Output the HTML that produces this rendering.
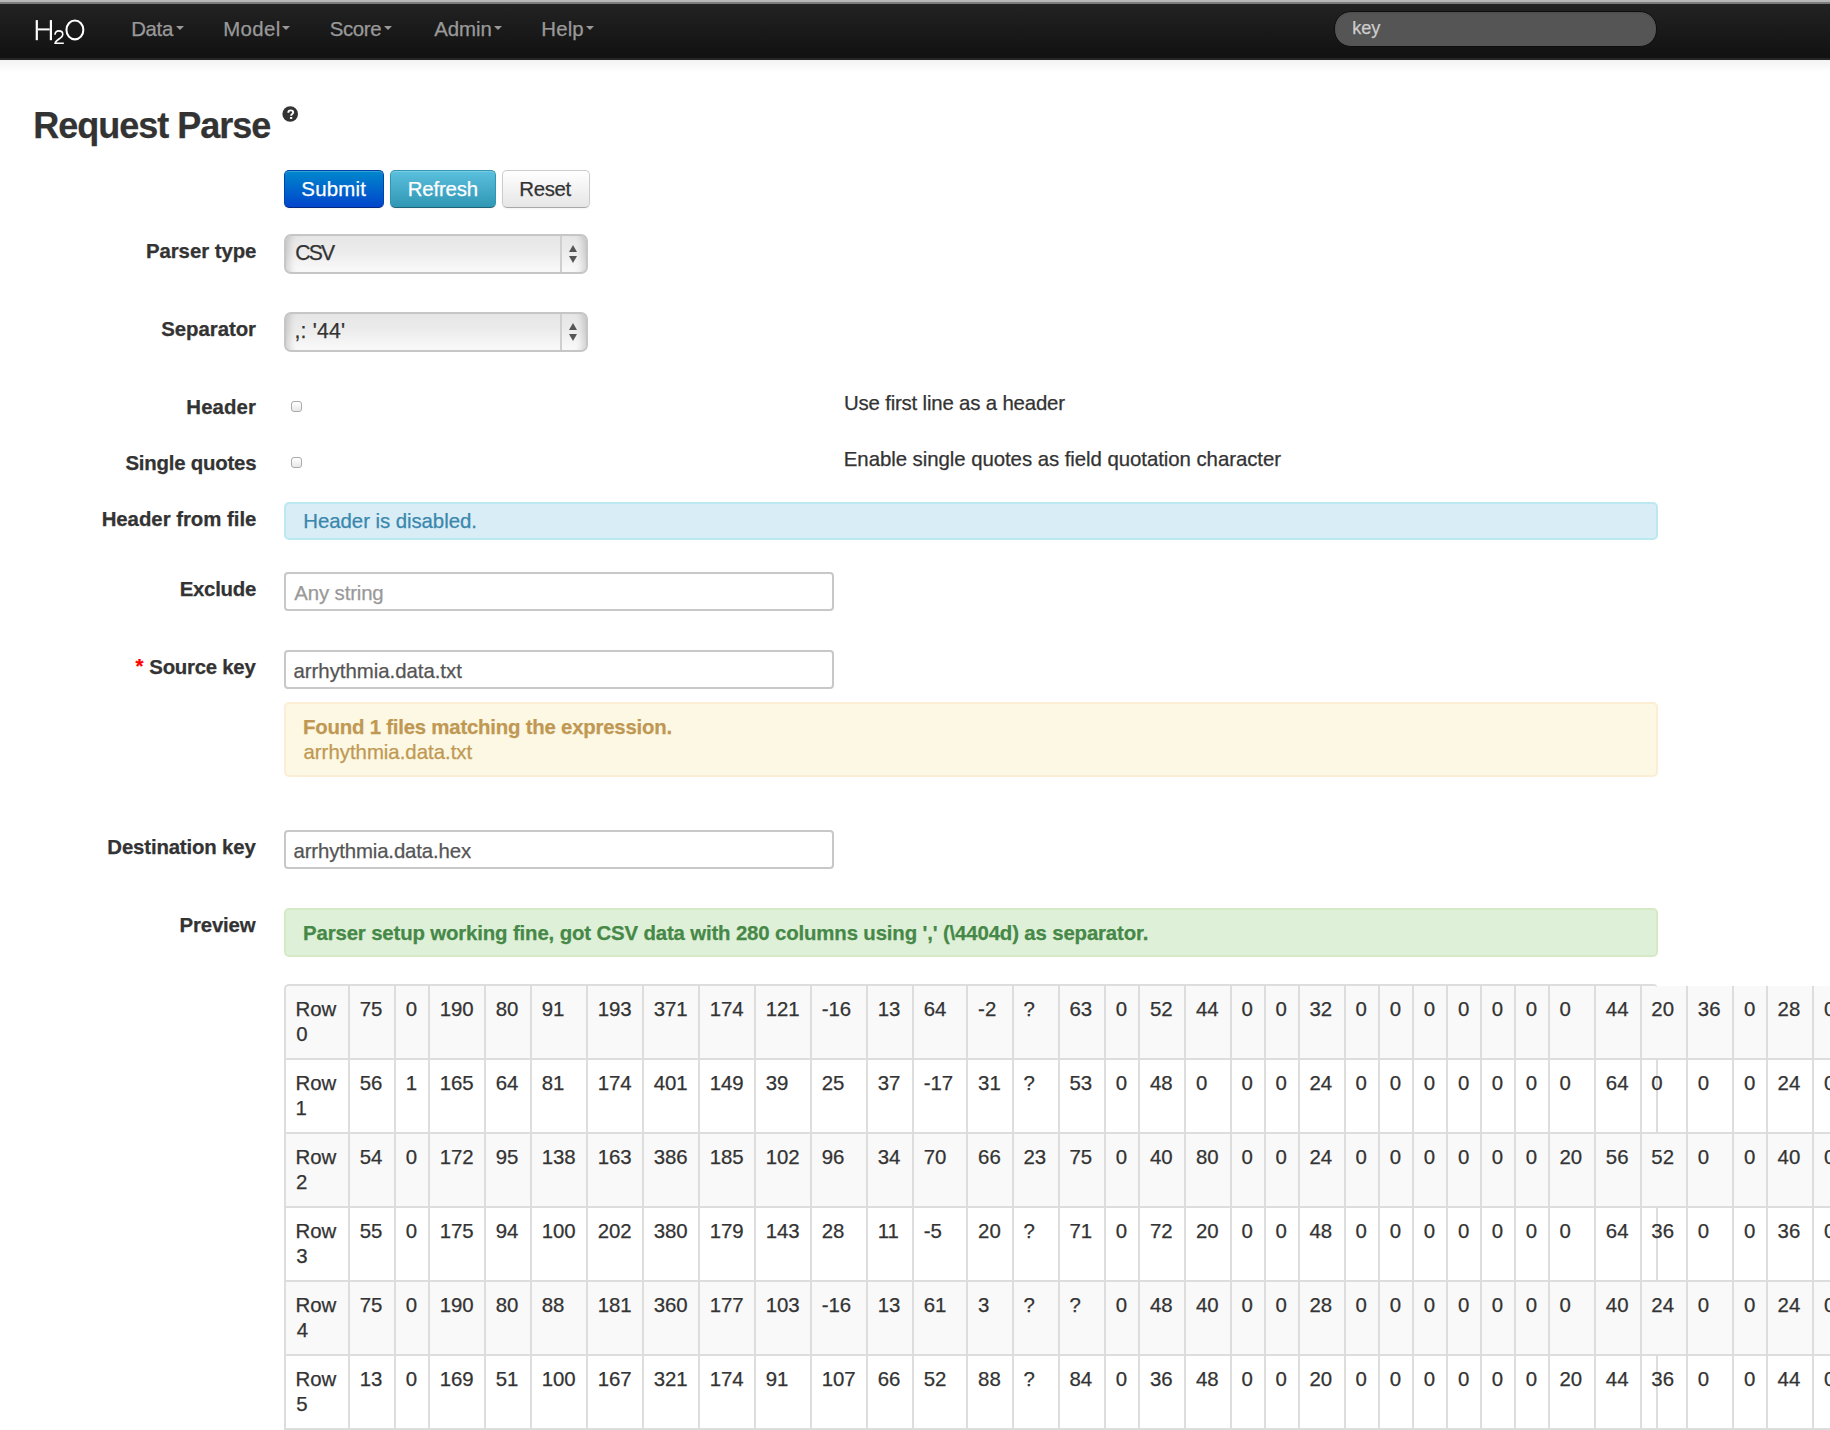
<!DOCTYPE html>
<html><head><meta charset="utf-8"><title>Request Parse</title><style>
html,body{margin:0;padding:0}
body{width:1830px;height:1430px;overflow:hidden;position:relative;background:#fff;font-family:"Liberation Sans",sans-serif;color:#333}
.t{position:absolute;white-space:nowrap;-webkit-text-stroke:0.25px}
.btn{position:absolute;box-sizing:border-box;border-radius:5px;box-shadow:inset 0 1px 0 rgba(255,255,255,.2),0 1px 2px rgba(0,0,0,.05)}
.sel{position:absolute;width:304px;height:40px;box-sizing:border-box;border:2px solid #c6c6c6;border-radius:7px;background:linear-gradient(#e6e6e6,#ececec 45%,#fafafa);box-shadow:inset 9px 0 7px -6px rgba(0,0,0,0.16),inset -9px 0 7px -6px rgba(0,0,0,0.16)}
.sdiv{position:absolute;left:274px;top:0;width:2px;height:36px;background:#cfcfcf}
.up{position:absolute;left:282.5px;top:8.5px;width:0;height:0;border-left:4.5px solid transparent;border-right:4.5px solid transparent;border-bottom:7px solid #555}
.dn{position:absolute;left:282.5px;top:19.5px;width:0;height:0;border-left:4.5px solid transparent;border-right:4.5px solid transparent;border-top:7px solid #555}
.cb{position:absolute;width:9.5px;height:9.5px;border:1px solid #aaa;border-radius:3px;background:linear-gradient(#fff,#e8e8e8)}
.al{position:absolute;border:2px solid;border-radius:5px}
.inp{position:absolute;left:284px;width:546px;height:35px;border:2px solid #c8c8c8;border-radius:4px;background:#fff}
</style></head><body>
<div style="position:absolute;left:0px;top:0px;width:1830px;height:2px;background:#b8b8b8"></div>
<div style="position:absolute;left:0px;top:2px;width:1830px;height:2px;background:#7c7c7c"></div>
<div style="position:absolute;left:0px;top:4px;width:1830px;height:54px;background:linear-gradient(#222,#111)"></div>
<div style="position:absolute;left:0px;top:58px;width:1830px;height:2px;background:#252525"></div>
<div style="position:absolute;left:0px;top:60px;width:1830px;height:12px;background:linear-gradient(rgba(0,0,0,0.05),rgba(0,0,0,0))"></div>
<svg style="position:absolute;left:30px;top:14px" width="60" height="36" viewBox="30 14 60 36"><rect x="35.7" y="20.1" width="2.2" height="20.1" fill="#fff"/><rect x="49.8" y="20.1" width="2.2" height="20.1" fill="#fff"/><rect x="38" y="28.4" width="11.7" height="2.0" fill="#fff"/><ellipse cx="74.9" cy="29.9" rx="8.45" ry="9.45" fill="none" stroke="#fff" stroke-width="2.05"/><path d="M55.0,34.8 C55.0,32.3 56.6,30.9 58.9,30.9 C61.2,30.9 62.8,32.4 62.8,34.4 C62.8,36.1 61.6,37.1 59.9,38.3 C57.6,39.9 55.3,41.3 55.1,43.3 L63.8,43.3" fill="none" stroke="#fff" stroke-width="1.6"/></svg>
<div class="t" id="t0" style="left:131.13px;top:16px;font-size:20.4px;line-height:26px;font-weight:400;color:#999;letter-spacing:-0.302px">Data</div>
<div style="position:absolute;left:176.0px;top:26px;width:0;height:0;border-left:4px solid transparent;border-right:4px solid transparent;border-top:4.5px solid #999"></div>
<div class="t" id="t1" style="left:223.23px;top:16px;font-size:20.4px;line-height:26px;font-weight:400;color:#999;letter-spacing:0.398px">Model</div>
<div style="position:absolute;left:281.7px;top:26px;width:0;height:0;border-left:4px solid transparent;border-right:4px solid transparent;border-top:4.5px solid #999"></div>
<div class="t" id="t2" style="left:329.77px;top:16px;font-size:20.4px;line-height:26px;font-weight:400;color:#999;letter-spacing:-0.362px">Score</div>
<div style="position:absolute;left:383.8px;top:26px;width:0;height:0;border-left:4px solid transparent;border-right:4px solid transparent;border-top:4.5px solid #999"></div>
<div class="t" id="t3" style="left:434.16px;top:16px;font-size:20.4px;line-height:26px;font-weight:400;color:#999;letter-spacing:-0.033px">Admin</div>
<div style="position:absolute;left:493.7px;top:26px;width:0;height:0;border-left:4px solid transparent;border-right:4px solid transparent;border-top:4.5px solid #999"></div>
<div class="t" id="t4" style="left:541.33px;top:16px;font-size:20.4px;line-height:26px;font-weight:400;color:#999;letter-spacing:0.131px">Help</div>
<div style="position:absolute;left:585.8px;top:26px;width:0;height:0;border-left:4px solid transparent;border-right:4px solid transparent;border-top:4.5px solid #999"></div>
<div style="position:absolute;left:1333.5px;top:10.5px;width:321px;height:34px;border:1.5px solid #0e0e0e;border-radius:17px;background:#555;box-shadow:inset 0 1px 2px rgba(0,0,0,.1)"></div>
<div class="t" id="t5" style="left:1352.17px;top:17px;font-size:18.2px;line-height:23px;font-weight:400;color:#ccc;">key</div>
<div class="t" id="t6" style="left:33.29px;top:103px;font-size:36px;line-height:45px;font-weight:700;color:#333;letter-spacing:-1.016px">Request Parse</div>
<svg style="position:absolute;left:275px;top:98px" width="30" height="30" viewBox="275 98 30 30"><circle cx="290.2" cy="114" r="7.8" fill="#333"/><path d="M288.3,112.7 C288.3,111.2 289.3,110.4 290.7,110.4 C292.2,110.4 293.2,111.3 293.2,112.4 C293.2,113.7 291.1,114.1 291.1,115.8" fill="none" stroke="#fff" stroke-width="1.9"/><rect x="289.95" y="117.0" width="2.3" height="1.9" fill="#fff"/></svg>
<div class="btn" style="left:284px;top:170px;width:100px;height:38px;background:linear-gradient(#0088cc,#0044cc);border:1px solid #0044aa;border-bottom-color:#002a80"></div>
<div class="t" id="t7" style="left:301.37px;top:176px;font-size:20.4px;line-height:26px;font-weight:400;color:#fff;letter-spacing:0.201px">Submit</div>
<div class="btn" style="left:390px;top:170px;width:106px;height:38px;background:linear-gradient(#5bc0de,#2f96b4);border:1px solid #2f96b4;border-bottom-color:#1f6377"></div>
<div class="t" id="t8" style="left:407.83px;top:176px;font-size:20.4px;line-height:26px;font-weight:400;color:#fff;letter-spacing:-0.185px">Refresh</div>
<div class="btn" style="left:502px;top:170px;width:88px;height:38px;background:linear-gradient(#fff,#e6e6e6);border:1px solid #ccc;border-bottom-color:#a8a8a8"></div>
<div class="t" id="t9" style="left:519.33px;top:176px;font-size:20.4px;line-height:26px;font-weight:400;color:#333;letter-spacing:-0.365px">Reset</div>
<div class="sel" style="left:284px;top:234px"><div class="sdiv"></div><div class="up"></div><div class="dn"></div></div>
<div class="t" id="t10" style="left:295.22px;top:240px;font-size:21.2px;line-height:26px;font-weight:400;color:#333;letter-spacing:-1.804px">CSV</div>
<div class="sel" style="left:284px;top:312px"><div class="sdiv"></div><div class="up"></div><div class="dn"></div></div>
<div class="t" id="t11" style="left:294.40px;top:318px;font-size:21.2px;line-height:26px;font-weight:400;color:#333;letter-spacing:0.240px">,: &#x27;44&#x27;</div>
<div class="t" id="t12" style="left:145.94px;top:238px;font-size:20.4px;line-height:26px;font-weight:700;color:#333;letter-spacing:-0.063px">Parser type</div>
<div class="t" id="t13" style="left:161.31px;top:316px;font-size:20.4px;line-height:26px;font-weight:700;color:#333;letter-spacing:-0.063px">Separator</div>
<div class="t" id="t14" style="left:186.34px;top:394px;font-size:20.4px;line-height:26px;font-weight:700;color:#333;letter-spacing:0.107px">Header</div>
<div class="t" id="t15" style="left:125.41px;top:450px;font-size:20.4px;line-height:26px;font-weight:700;color:#333;letter-spacing:-0.214px">Single quotes</div>
<div class="cb" style="left:290.5px;top:400.5px"></div>
<div class="cb" style="left:290.5px;top:456.5px"></div>
<div class="t" id="t16" style="left:843.93px;top:390px;font-size:20.4px;line-height:26px;font-weight:400;color:#333;letter-spacing:-0.177px">Use first line as a header</div>
<div class="t" id="t17" style="left:843.83px;top:446px;font-size:20.4px;line-height:26px;font-weight:400;color:#333;letter-spacing:-0.055px">Enable single quotes as field quotation character</div>
<div class="t" id="t18" style="left:101.64px;top:506px;font-size:20.4px;line-height:26px;font-weight:700;color:#333;letter-spacing:-0.033px">Header from file</div>
<div class="al" style="left:284px;top:502px;width:1370px;height:34px;background:#d9edf7;border-color:#bce8f1"></div>
<div class="t" id="t19" style="left:303.33px;top:508px;font-size:20.4px;line-height:26px;font-weight:400;color:#3a87ad;letter-spacing:-0.057px">Header is disabled.</div>
<div class="t" id="t20" style="left:179.64px;top:576px;font-size:20.4px;line-height:26px;font-weight:700;color:#333;letter-spacing:-0.240px">Exclude</div>
<div class="inp" style="top:572px"></div>
<div class="t" id="t21" style="left:294.36px;top:580px;font-size:20.4px;line-height:26px;font-weight:400;color:#999;letter-spacing:-0.146px">Any string</div>
<div class="t" id="t22" style="left:135.44px;top:653px;font-size:20.4px;line-height:26px;font-weight:700;color:#f00;">*</div>
<div class="t" id="t23" style="left:149.31px;top:654px;font-size:20.4px;line-height:26px;font-weight:700;color:#333;letter-spacing:-0.259px">Source key</div>
<div class="inp" style="top:650px"></div>
<div class="t" id="t24" style="left:293.53px;top:658px;font-size:20.4px;line-height:26px;font-weight:400;color:#555;letter-spacing:-0.031px">arrhythmia.data.txt</div>
<div class="al" style="left:284px;top:702px;width:1370px;height:71px;background:#fcf8e3;border-color:#fbeed5"></div>
<div class="t" id="t25" style="left:303.04px;top:714px;font-size:20.4px;line-height:26px;font-weight:700;color:#c09853;letter-spacing:-0.220px">Found 1 files matching the expression.</div>
<div class="t" id="t26" style="left:303.53px;top:739px;font-size:20.4px;line-height:26px;font-weight:400;color:#c09853;letter-spacing:-0.014px">arrhythmia.data.txt</div>
<div class="t" id="t27" style="left:107.34px;top:834px;font-size:20.4px;line-height:26px;font-weight:700;color:#333;letter-spacing:-0.160px">Destination key</div>
<div class="inp" style="top:830px"></div>
<div class="t" id="t28" style="left:293.53px;top:838px;font-size:20.4px;line-height:26px;font-weight:400;color:#555;letter-spacing:-0.146px">arrhythmia.data.hex</div>
<div class="t" id="t29" style="left:179.54px;top:912px;font-size:20.4px;line-height:26px;font-weight:700;color:#333;letter-spacing:-0.161px">Preview</div>
<div class="al" style="left:284px;top:908px;width:1370px;height:45px;background:#dff0d8;border-color:#d6e9c6"></div>
<div class="t" id="t30" style="left:303.04px;top:920px;font-size:20.4px;line-height:26px;font-weight:700;color:#468847;letter-spacing:-0.149px">Parser setup working fine, got CSV data with 280 columns using &#x27;,&#x27; (\4404d) as separator.</div>
<div style="position:absolute;left:285px;top:986px;width:1545px;height:73px;background:#f9f9f9"></div>
<div style="position:absolute;left:285px;top:1134px;width:1545px;height:73px;background:#f9f9f9"></div>
<div style="position:absolute;left:285px;top:1282px;width:1545px;height:73px;background:#f9f9f9"></div>
<div style="position:absolute;left:284px;top:984px;width:1371px;height:460px;border-top:2px solid #ddd;border-left:2px solid #ddd;border-top-left-radius:5px;border-top-right-radius:3px"></div>
<div style="position:absolute;left:284px;top:1058px;width:1546px;height:2px;background:#ddd"></div>
<div style="position:absolute;left:284px;top:1132px;width:1546px;height:2px;background:#ddd"></div>
<div style="position:absolute;left:284px;top:1206px;width:1546px;height:2px;background:#ddd"></div>
<div style="position:absolute;left:284px;top:1280px;width:1546px;height:2px;background:#ddd"></div>
<div style="position:absolute;left:284px;top:1354px;width:1546px;height:2px;background:#ddd"></div>
<div style="position:absolute;left:284px;top:1428px;width:1546px;height:2px;background:#ddd"></div>
<div style="position:absolute;left:348px;top:986px;width:2px;height:444px;background:#ddd"></div>
<div style="position:absolute;left:394px;top:986px;width:2px;height:444px;background:#ddd"></div>
<div style="position:absolute;left:428px;top:986px;width:2px;height:444px;background:#ddd"></div>
<div style="position:absolute;left:484px;top:986px;width:2px;height:444px;background:#ddd"></div>
<div style="position:absolute;left:530px;top:986px;width:2px;height:444px;background:#ddd"></div>
<div style="position:absolute;left:586px;top:986px;width:2px;height:444px;background:#ddd"></div>
<div style="position:absolute;left:642px;top:986px;width:2px;height:444px;background:#ddd"></div>
<div style="position:absolute;left:698px;top:986px;width:2px;height:444px;background:#ddd"></div>
<div style="position:absolute;left:754px;top:986px;width:2px;height:444px;background:#ddd"></div>
<div style="position:absolute;left:810px;top:986px;width:2px;height:444px;background:#ddd"></div>
<div style="position:absolute;left:866px;top:986px;width:2px;height:444px;background:#ddd"></div>
<div style="position:absolute;left:912px;top:986px;width:2px;height:444px;background:#ddd"></div>
<div style="position:absolute;left:966px;top:986px;width:2px;height:444px;background:#ddd"></div>
<div style="position:absolute;left:1012px;top:986px;width:2px;height:444px;background:#ddd"></div>
<div style="position:absolute;left:1058px;top:986px;width:2px;height:444px;background:#ddd"></div>
<div style="position:absolute;left:1104px;top:986px;width:2px;height:444px;background:#ddd"></div>
<div style="position:absolute;left:1138px;top:986px;width:2px;height:444px;background:#ddd"></div>
<div style="position:absolute;left:1184px;top:986px;width:2px;height:444px;background:#ddd"></div>
<div style="position:absolute;left:1230px;top:986px;width:2px;height:444px;background:#ddd"></div>
<div style="position:absolute;left:1264px;top:986px;width:2px;height:444px;background:#ddd"></div>
<div style="position:absolute;left:1298px;top:986px;width:2px;height:444px;background:#ddd"></div>
<div style="position:absolute;left:1344px;top:986px;width:2px;height:444px;background:#ddd"></div>
<div style="position:absolute;left:1378px;top:986px;width:2px;height:444px;background:#ddd"></div>
<div style="position:absolute;left:1412px;top:986px;width:2px;height:444px;background:#ddd"></div>
<div style="position:absolute;left:1446px;top:986px;width:2px;height:444px;background:#ddd"></div>
<div style="position:absolute;left:1480px;top:986px;width:2px;height:444px;background:#ddd"></div>
<div style="position:absolute;left:1514px;top:986px;width:2px;height:444px;background:#ddd"></div>
<div style="position:absolute;left:1548px;top:986px;width:2px;height:444px;background:#ddd"></div>
<div style="position:absolute;left:1594px;top:986px;width:2px;height:444px;background:#ddd"></div>
<div style="position:absolute;left:1640px;top:986px;width:2px;height:444px;background:#ddd"></div>
<div style="position:absolute;left:1686px;top:986px;width:2px;height:444px;background:#ddd"></div>
<div style="position:absolute;left:1732px;top:986px;width:2px;height:444px;background:#ddd"></div>
<div style="position:absolute;left:1766px;top:986px;width:2px;height:444px;background:#ddd"></div>
<div style="position:absolute;left:1812px;top:986px;width:2px;height:444px;background:#ddd"></div>
<div style="position:absolute;left:1656px;top:1060px;width:2px;height:73px;background:#ddd"></div>
<div style="position:absolute;left:1656px;top:1208px;width:2px;height:73px;background:#ddd"></div>
<div style="position:absolute;left:1656px;top:1356px;width:2px;height:73px;background:#ddd"></div>
<div class="t" id="t31" style="left:295.43px;top:996px;font-size:20.4px;line-height:26px;font-weight:400;color:#333;">Row</div>
<div class="t" id="t32" style="left:296.30px;top:1021px;font-size:20.4px;line-height:26px;font-weight:400;color:#333;">0</div>
<div class="t" id="t33" style="left:359.70px;top:996px;font-size:20.4px;line-height:26px;font-weight:400;color:#333;">75</div>
<div class="t" id="t34" style="left:405.70px;top:996px;font-size:20.4px;line-height:26px;font-weight:400;color:#333;">0</div>
<div class="t" id="t35" style="left:439.70px;top:996px;font-size:20.4px;line-height:26px;font-weight:400;color:#333;">190</div>
<div class="t" id="t36" style="left:495.70px;top:996px;font-size:20.4px;line-height:26px;font-weight:400;color:#333;">80</div>
<div class="t" id="t37" style="left:541.70px;top:996px;font-size:20.4px;line-height:26px;font-weight:400;color:#333;">91</div>
<div class="t" id="t38" style="left:597.70px;top:996px;font-size:20.4px;line-height:26px;font-weight:400;color:#333;">193</div>
<div class="t" id="t39" style="left:653.70px;top:996px;font-size:20.4px;line-height:26px;font-weight:400;color:#333;">371</div>
<div class="t" id="t40" style="left:709.70px;top:996px;font-size:20.4px;line-height:26px;font-weight:400;color:#333;">174</div>
<div class="t" id="t41" style="left:765.70px;top:996px;font-size:20.4px;line-height:26px;font-weight:400;color:#333;">121</div>
<div class="t" id="t42" style="left:821.70px;top:996px;font-size:20.4px;line-height:26px;font-weight:400;color:#333;">-16</div>
<div class="t" id="t43" style="left:877.70px;top:996px;font-size:20.4px;line-height:26px;font-weight:400;color:#333;">13</div>
<div class="t" id="t44" style="left:923.70px;top:996px;font-size:20.4px;line-height:26px;font-weight:400;color:#333;">64</div>
<div class="t" id="t45" style="left:978.10px;top:996px;font-size:20.4px;line-height:26px;font-weight:400;color:#333;">-2</div>
<div class="t" id="t46" style="left:1023.50px;top:996px;font-size:20.4px;line-height:26px;font-weight:400;color:#333;">?</div>
<div class="t" id="t47" style="left:1069.50px;top:996px;font-size:20.4px;line-height:26px;font-weight:400;color:#333;">63</div>
<div class="t" id="t48" style="left:1115.70px;top:996px;font-size:20.4px;line-height:26px;font-weight:400;color:#333;">0</div>
<div class="t" id="t49" style="left:1150.00px;top:996px;font-size:20.4px;line-height:26px;font-weight:400;color:#333;">52</div>
<div class="t" id="t50" style="left:1196.00px;top:996px;font-size:20.4px;line-height:26px;font-weight:400;color:#333;">44</div>
<div class="t" id="t51" style="left:1241.50px;top:996px;font-size:20.4px;line-height:26px;font-weight:400;color:#333;">0</div>
<div class="t" id="t52" style="left:1275.40px;top:996px;font-size:20.4px;line-height:26px;font-weight:400;color:#333;">0</div>
<div class="t" id="t53" style="left:1309.40px;top:996px;font-size:20.4px;line-height:26px;font-weight:400;color:#333;">32</div>
<div class="t" id="t54" style="left:1355.40px;top:996px;font-size:20.4px;line-height:26px;font-weight:400;color:#333;">0</div>
<div class="t" id="t55" style="left:1389.70px;top:996px;font-size:20.4px;line-height:26px;font-weight:400;color:#333;">0</div>
<div class="t" id="t56" style="left:1423.70px;top:996px;font-size:20.4px;line-height:26px;font-weight:400;color:#333;">0</div>
<div class="t" id="t57" style="left:1457.90px;top:996px;font-size:20.4px;line-height:26px;font-weight:400;color:#333;">0</div>
<div class="t" id="t58" style="left:1491.80px;top:996px;font-size:20.4px;line-height:26px;font-weight:400;color:#333;">0</div>
<div class="t" id="t59" style="left:1525.70px;top:996px;font-size:20.4px;line-height:26px;font-weight:400;color:#333;">0</div>
<div class="t" id="t60" style="left:1559.50px;top:996px;font-size:20.4px;line-height:26px;font-weight:400;color:#333;">0</div>
<div class="t" id="t61" style="left:1605.80px;top:996px;font-size:20.4px;line-height:26px;font-weight:400;color:#333;">44</div>
<div class="t" id="t62" style="left:1651.30px;top:996px;font-size:20.4px;line-height:26px;font-weight:400;color:#333;">20</div>
<div class="t" id="t63" style="left:1697.80px;top:996px;font-size:20.4px;line-height:26px;font-weight:400;color:#333;">36</div>
<div class="t" id="t64" style="left:1744.10px;top:996px;font-size:20.4px;line-height:26px;font-weight:400;color:#333;">0</div>
<div class="t" id="t65" style="left:1777.60px;top:996px;font-size:20.4px;line-height:26px;font-weight:400;color:#333;">28</div>
<div class="t" id="t66" style="left:1824.00px;top:996px;font-size:20.4px;line-height:26px;font-weight:400;color:#333;">0</div>
<div class="t" id="t67" style="left:295.43px;top:1070px;font-size:20.4px;line-height:26px;font-weight:400;color:#333;">Row</div>
<div class="t" id="t68" style="left:295.55px;top:1095px;font-size:20.4px;line-height:26px;font-weight:400;color:#333;">1</div>
<div class="t" id="t69" style="left:359.70px;top:1070px;font-size:20.4px;line-height:26px;font-weight:400;color:#333;">56</div>
<div class="t" id="t70" style="left:405.70px;top:1070px;font-size:20.4px;line-height:26px;font-weight:400;color:#333;">1</div>
<div class="t" id="t71" style="left:439.70px;top:1070px;font-size:20.4px;line-height:26px;font-weight:400;color:#333;">165</div>
<div class="t" id="t72" style="left:495.70px;top:1070px;font-size:20.4px;line-height:26px;font-weight:400;color:#333;">64</div>
<div class="t" id="t73" style="left:541.70px;top:1070px;font-size:20.4px;line-height:26px;font-weight:400;color:#333;">81</div>
<div class="t" id="t74" style="left:597.70px;top:1070px;font-size:20.4px;line-height:26px;font-weight:400;color:#333;">174</div>
<div class="t" id="t75" style="left:653.70px;top:1070px;font-size:20.4px;line-height:26px;font-weight:400;color:#333;">401</div>
<div class="t" id="t76" style="left:709.70px;top:1070px;font-size:20.4px;line-height:26px;font-weight:400;color:#333;">149</div>
<div class="t" id="t77" style="left:765.70px;top:1070px;font-size:20.4px;line-height:26px;font-weight:400;color:#333;">39</div>
<div class="t" id="t78" style="left:821.70px;top:1070px;font-size:20.4px;line-height:26px;font-weight:400;color:#333;">25</div>
<div class="t" id="t79" style="left:877.70px;top:1070px;font-size:20.4px;line-height:26px;font-weight:400;color:#333;">37</div>
<div class="t" id="t80" style="left:923.70px;top:1070px;font-size:20.4px;line-height:26px;font-weight:400;color:#333;">-17</div>
<div class="t" id="t81" style="left:978.10px;top:1070px;font-size:20.4px;line-height:26px;font-weight:400;color:#333;">31</div>
<div class="t" id="t82" style="left:1023.50px;top:1070px;font-size:20.4px;line-height:26px;font-weight:400;color:#333;">?</div>
<div class="t" id="t83" style="left:1069.50px;top:1070px;font-size:20.4px;line-height:26px;font-weight:400;color:#333;">53</div>
<div class="t" id="t84" style="left:1115.70px;top:1070px;font-size:20.4px;line-height:26px;font-weight:400;color:#333;">0</div>
<div class="t" id="t85" style="left:1150.00px;top:1070px;font-size:20.4px;line-height:26px;font-weight:400;color:#333;">48</div>
<div class="t" id="t86" style="left:1196.00px;top:1070px;font-size:20.4px;line-height:26px;font-weight:400;color:#333;">0</div>
<div class="t" id="t87" style="left:1241.50px;top:1070px;font-size:20.4px;line-height:26px;font-weight:400;color:#333;">0</div>
<div class="t" id="t88" style="left:1275.40px;top:1070px;font-size:20.4px;line-height:26px;font-weight:400;color:#333;">0</div>
<div class="t" id="t89" style="left:1309.40px;top:1070px;font-size:20.4px;line-height:26px;font-weight:400;color:#333;">24</div>
<div class="t" id="t90" style="left:1355.40px;top:1070px;font-size:20.4px;line-height:26px;font-weight:400;color:#333;">0</div>
<div class="t" id="t91" style="left:1389.70px;top:1070px;font-size:20.4px;line-height:26px;font-weight:400;color:#333;">0</div>
<div class="t" id="t92" style="left:1423.70px;top:1070px;font-size:20.4px;line-height:26px;font-weight:400;color:#333;">0</div>
<div class="t" id="t93" style="left:1457.90px;top:1070px;font-size:20.4px;line-height:26px;font-weight:400;color:#333;">0</div>
<div class="t" id="t94" style="left:1491.80px;top:1070px;font-size:20.4px;line-height:26px;font-weight:400;color:#333;">0</div>
<div class="t" id="t95" style="left:1525.70px;top:1070px;font-size:20.4px;line-height:26px;font-weight:400;color:#333;">0</div>
<div class="t" id="t96" style="left:1559.50px;top:1070px;font-size:20.4px;line-height:26px;font-weight:400;color:#333;">0</div>
<div class="t" id="t97" style="left:1605.80px;top:1070px;font-size:20.4px;line-height:26px;font-weight:400;color:#333;">64</div>
<div class="t" id="t98" style="left:1651.30px;top:1070px;font-size:20.4px;line-height:26px;font-weight:400;color:#333;">0</div>
<div class="t" id="t99" style="left:1697.80px;top:1070px;font-size:20.4px;line-height:26px;font-weight:400;color:#333;">0</div>
<div class="t" id="t100" style="left:1744.10px;top:1070px;font-size:20.4px;line-height:26px;font-weight:400;color:#333;">0</div>
<div class="t" id="t101" style="left:1777.60px;top:1070px;font-size:20.4px;line-height:26px;font-weight:400;color:#333;">24</div>
<div class="t" id="t102" style="left:1824.00px;top:1070px;font-size:20.4px;line-height:26px;font-weight:400;color:#333;">0</div>
<div class="t" id="t103" style="left:295.43px;top:1144px;font-size:20.4px;line-height:26px;font-weight:400;color:#333;">Row</div>
<div class="t" id="t104" style="left:296.07px;top:1169px;font-size:20.4px;line-height:26px;font-weight:400;color:#333;">2</div>
<div class="t" id="t105" style="left:359.70px;top:1144px;font-size:20.4px;line-height:26px;font-weight:400;color:#333;">54</div>
<div class="t" id="t106" style="left:405.70px;top:1144px;font-size:20.4px;line-height:26px;font-weight:400;color:#333;">0</div>
<div class="t" id="t107" style="left:439.70px;top:1144px;font-size:20.4px;line-height:26px;font-weight:400;color:#333;">172</div>
<div class="t" id="t108" style="left:495.70px;top:1144px;font-size:20.4px;line-height:26px;font-weight:400;color:#333;">95</div>
<div class="t" id="t109" style="left:541.70px;top:1144px;font-size:20.4px;line-height:26px;font-weight:400;color:#333;">138</div>
<div class="t" id="t110" style="left:597.70px;top:1144px;font-size:20.4px;line-height:26px;font-weight:400;color:#333;">163</div>
<div class="t" id="t111" style="left:653.70px;top:1144px;font-size:20.4px;line-height:26px;font-weight:400;color:#333;">386</div>
<div class="t" id="t112" style="left:709.70px;top:1144px;font-size:20.4px;line-height:26px;font-weight:400;color:#333;">185</div>
<div class="t" id="t113" style="left:765.70px;top:1144px;font-size:20.4px;line-height:26px;font-weight:400;color:#333;">102</div>
<div class="t" id="t114" style="left:821.70px;top:1144px;font-size:20.4px;line-height:26px;font-weight:400;color:#333;">96</div>
<div class="t" id="t115" style="left:877.70px;top:1144px;font-size:20.4px;line-height:26px;font-weight:400;color:#333;">34</div>
<div class="t" id="t116" style="left:923.70px;top:1144px;font-size:20.4px;line-height:26px;font-weight:400;color:#333;">70</div>
<div class="t" id="t117" style="left:978.10px;top:1144px;font-size:20.4px;line-height:26px;font-weight:400;color:#333;">66</div>
<div class="t" id="t118" style="left:1023.50px;top:1144px;font-size:20.4px;line-height:26px;font-weight:400;color:#333;">23</div>
<div class="t" id="t119" style="left:1069.50px;top:1144px;font-size:20.4px;line-height:26px;font-weight:400;color:#333;">75</div>
<div class="t" id="t120" style="left:1115.70px;top:1144px;font-size:20.4px;line-height:26px;font-weight:400;color:#333;">0</div>
<div class="t" id="t121" style="left:1150.00px;top:1144px;font-size:20.4px;line-height:26px;font-weight:400;color:#333;">40</div>
<div class="t" id="t122" style="left:1196.00px;top:1144px;font-size:20.4px;line-height:26px;font-weight:400;color:#333;">80</div>
<div class="t" id="t123" style="left:1241.50px;top:1144px;font-size:20.4px;line-height:26px;font-weight:400;color:#333;">0</div>
<div class="t" id="t124" style="left:1275.40px;top:1144px;font-size:20.4px;line-height:26px;font-weight:400;color:#333;">0</div>
<div class="t" id="t125" style="left:1309.40px;top:1144px;font-size:20.4px;line-height:26px;font-weight:400;color:#333;">24</div>
<div class="t" id="t126" style="left:1355.40px;top:1144px;font-size:20.4px;line-height:26px;font-weight:400;color:#333;">0</div>
<div class="t" id="t127" style="left:1389.70px;top:1144px;font-size:20.4px;line-height:26px;font-weight:400;color:#333;">0</div>
<div class="t" id="t128" style="left:1423.70px;top:1144px;font-size:20.4px;line-height:26px;font-weight:400;color:#333;">0</div>
<div class="t" id="t129" style="left:1457.90px;top:1144px;font-size:20.4px;line-height:26px;font-weight:400;color:#333;">0</div>
<div class="t" id="t130" style="left:1491.80px;top:1144px;font-size:20.4px;line-height:26px;font-weight:400;color:#333;">0</div>
<div class="t" id="t131" style="left:1525.70px;top:1144px;font-size:20.4px;line-height:26px;font-weight:400;color:#333;">0</div>
<div class="t" id="t132" style="left:1559.50px;top:1144px;font-size:20.4px;line-height:26px;font-weight:400;color:#333;">20</div>
<div class="t" id="t133" style="left:1605.80px;top:1144px;font-size:20.4px;line-height:26px;font-weight:400;color:#333;">56</div>
<div class="t" id="t134" style="left:1651.30px;top:1144px;font-size:20.4px;line-height:26px;font-weight:400;color:#333;">52</div>
<div class="t" id="t135" style="left:1697.80px;top:1144px;font-size:20.4px;line-height:26px;font-weight:400;color:#333;">0</div>
<div class="t" id="t136" style="left:1744.10px;top:1144px;font-size:20.4px;line-height:26px;font-weight:400;color:#333;">0</div>
<div class="t" id="t137" style="left:1777.60px;top:1144px;font-size:20.4px;line-height:26px;font-weight:400;color:#333;">40</div>
<div class="t" id="t138" style="left:1824.00px;top:1144px;font-size:20.4px;line-height:26px;font-weight:400;color:#333;">0</div>
<div class="t" id="t139" style="left:295.43px;top:1218px;font-size:20.4px;line-height:26px;font-weight:400;color:#333;">Row</div>
<div class="t" id="t140" style="left:296.32px;top:1243px;font-size:20.4px;line-height:26px;font-weight:400;color:#333;">3</div>
<div class="t" id="t141" style="left:359.70px;top:1218px;font-size:20.4px;line-height:26px;font-weight:400;color:#333;">55</div>
<div class="t" id="t142" style="left:405.70px;top:1218px;font-size:20.4px;line-height:26px;font-weight:400;color:#333;">0</div>
<div class="t" id="t143" style="left:439.70px;top:1218px;font-size:20.4px;line-height:26px;font-weight:400;color:#333;">175</div>
<div class="t" id="t144" style="left:495.70px;top:1218px;font-size:20.4px;line-height:26px;font-weight:400;color:#333;">94</div>
<div class="t" id="t145" style="left:541.70px;top:1218px;font-size:20.4px;line-height:26px;font-weight:400;color:#333;">100</div>
<div class="t" id="t146" style="left:597.70px;top:1218px;font-size:20.4px;line-height:26px;font-weight:400;color:#333;">202</div>
<div class="t" id="t147" style="left:653.70px;top:1218px;font-size:20.4px;line-height:26px;font-weight:400;color:#333;">380</div>
<div class="t" id="t148" style="left:709.70px;top:1218px;font-size:20.4px;line-height:26px;font-weight:400;color:#333;">179</div>
<div class="t" id="t149" style="left:765.70px;top:1218px;font-size:20.4px;line-height:26px;font-weight:400;color:#333;">143</div>
<div class="t" id="t150" style="left:821.70px;top:1218px;font-size:20.4px;line-height:26px;font-weight:400;color:#333;">28</div>
<div class="t" id="t151" style="left:877.70px;top:1218px;font-size:20.4px;line-height:26px;font-weight:400;color:#333;">11</div>
<div class="t" id="t152" style="left:923.70px;top:1218px;font-size:20.4px;line-height:26px;font-weight:400;color:#333;">-5</div>
<div class="t" id="t153" style="left:978.10px;top:1218px;font-size:20.4px;line-height:26px;font-weight:400;color:#333;">20</div>
<div class="t" id="t154" style="left:1023.50px;top:1218px;font-size:20.4px;line-height:26px;font-weight:400;color:#333;">?</div>
<div class="t" id="t155" style="left:1069.50px;top:1218px;font-size:20.4px;line-height:26px;font-weight:400;color:#333;">71</div>
<div class="t" id="t156" style="left:1115.70px;top:1218px;font-size:20.4px;line-height:26px;font-weight:400;color:#333;">0</div>
<div class="t" id="t157" style="left:1150.00px;top:1218px;font-size:20.4px;line-height:26px;font-weight:400;color:#333;">72</div>
<div class="t" id="t158" style="left:1196.00px;top:1218px;font-size:20.4px;line-height:26px;font-weight:400;color:#333;">20</div>
<div class="t" id="t159" style="left:1241.50px;top:1218px;font-size:20.4px;line-height:26px;font-weight:400;color:#333;">0</div>
<div class="t" id="t160" style="left:1275.40px;top:1218px;font-size:20.4px;line-height:26px;font-weight:400;color:#333;">0</div>
<div class="t" id="t161" style="left:1309.40px;top:1218px;font-size:20.4px;line-height:26px;font-weight:400;color:#333;">48</div>
<div class="t" id="t162" style="left:1355.40px;top:1218px;font-size:20.4px;line-height:26px;font-weight:400;color:#333;">0</div>
<div class="t" id="t163" style="left:1389.70px;top:1218px;font-size:20.4px;line-height:26px;font-weight:400;color:#333;">0</div>
<div class="t" id="t164" style="left:1423.70px;top:1218px;font-size:20.4px;line-height:26px;font-weight:400;color:#333;">0</div>
<div class="t" id="t165" style="left:1457.90px;top:1218px;font-size:20.4px;line-height:26px;font-weight:400;color:#333;">0</div>
<div class="t" id="t166" style="left:1491.80px;top:1218px;font-size:20.4px;line-height:26px;font-weight:400;color:#333;">0</div>
<div class="t" id="t167" style="left:1525.70px;top:1218px;font-size:20.4px;line-height:26px;font-weight:400;color:#333;">0</div>
<div class="t" id="t168" style="left:1559.50px;top:1218px;font-size:20.4px;line-height:26px;font-weight:400;color:#333;">0</div>
<div class="t" id="t169" style="left:1605.80px;top:1218px;font-size:20.4px;line-height:26px;font-weight:400;color:#333;">64</div>
<div class="t" id="t170" style="left:1651.30px;top:1218px;font-size:20.4px;line-height:26px;font-weight:400;color:#333;">36</div>
<div class="t" id="t171" style="left:1697.80px;top:1218px;font-size:20.4px;line-height:26px;font-weight:400;color:#333;">0</div>
<div class="t" id="t172" style="left:1744.10px;top:1218px;font-size:20.4px;line-height:26px;font-weight:400;color:#333;">0</div>
<div class="t" id="t173" style="left:1777.60px;top:1218px;font-size:20.4px;line-height:26px;font-weight:400;color:#333;">36</div>
<div class="t" id="t174" style="left:1824.00px;top:1218px;font-size:20.4px;line-height:26px;font-weight:400;color:#333;">0</div>
<div class="t" id="t175" style="left:295.43px;top:1292px;font-size:20.4px;line-height:26px;font-weight:400;color:#333;">Row</div>
<div class="t" id="t176" style="left:296.63px;top:1317px;font-size:20.4px;line-height:26px;font-weight:400;color:#333;">4</div>
<div class="t" id="t177" style="left:359.70px;top:1292px;font-size:20.4px;line-height:26px;font-weight:400;color:#333;">75</div>
<div class="t" id="t178" style="left:405.70px;top:1292px;font-size:20.4px;line-height:26px;font-weight:400;color:#333;">0</div>
<div class="t" id="t179" style="left:439.70px;top:1292px;font-size:20.4px;line-height:26px;font-weight:400;color:#333;">190</div>
<div class="t" id="t180" style="left:495.70px;top:1292px;font-size:20.4px;line-height:26px;font-weight:400;color:#333;">80</div>
<div class="t" id="t181" style="left:541.70px;top:1292px;font-size:20.4px;line-height:26px;font-weight:400;color:#333;">88</div>
<div class="t" id="t182" style="left:597.70px;top:1292px;font-size:20.4px;line-height:26px;font-weight:400;color:#333;">181</div>
<div class="t" id="t183" style="left:653.70px;top:1292px;font-size:20.4px;line-height:26px;font-weight:400;color:#333;">360</div>
<div class="t" id="t184" style="left:709.70px;top:1292px;font-size:20.4px;line-height:26px;font-weight:400;color:#333;">177</div>
<div class="t" id="t185" style="left:765.70px;top:1292px;font-size:20.4px;line-height:26px;font-weight:400;color:#333;">103</div>
<div class="t" id="t186" style="left:821.70px;top:1292px;font-size:20.4px;line-height:26px;font-weight:400;color:#333;">-16</div>
<div class="t" id="t187" style="left:877.70px;top:1292px;font-size:20.4px;line-height:26px;font-weight:400;color:#333;">13</div>
<div class="t" id="t188" style="left:923.70px;top:1292px;font-size:20.4px;line-height:26px;font-weight:400;color:#333;">61</div>
<div class="t" id="t189" style="left:978.10px;top:1292px;font-size:20.4px;line-height:26px;font-weight:400;color:#333;">3</div>
<div class="t" id="t190" style="left:1023.50px;top:1292px;font-size:20.4px;line-height:26px;font-weight:400;color:#333;">?</div>
<div class="t" id="t191" style="left:1069.50px;top:1292px;font-size:20.4px;line-height:26px;font-weight:400;color:#333;">?</div>
<div class="t" id="t192" style="left:1115.70px;top:1292px;font-size:20.4px;line-height:26px;font-weight:400;color:#333;">0</div>
<div class="t" id="t193" style="left:1150.00px;top:1292px;font-size:20.4px;line-height:26px;font-weight:400;color:#333;">48</div>
<div class="t" id="t194" style="left:1196.00px;top:1292px;font-size:20.4px;line-height:26px;font-weight:400;color:#333;">40</div>
<div class="t" id="t195" style="left:1241.50px;top:1292px;font-size:20.4px;line-height:26px;font-weight:400;color:#333;">0</div>
<div class="t" id="t196" style="left:1275.40px;top:1292px;font-size:20.4px;line-height:26px;font-weight:400;color:#333;">0</div>
<div class="t" id="t197" style="left:1309.40px;top:1292px;font-size:20.4px;line-height:26px;font-weight:400;color:#333;">28</div>
<div class="t" id="t198" style="left:1355.40px;top:1292px;font-size:20.4px;line-height:26px;font-weight:400;color:#333;">0</div>
<div class="t" id="t199" style="left:1389.70px;top:1292px;font-size:20.4px;line-height:26px;font-weight:400;color:#333;">0</div>
<div class="t" id="t200" style="left:1423.70px;top:1292px;font-size:20.4px;line-height:26px;font-weight:400;color:#333;">0</div>
<div class="t" id="t201" style="left:1457.90px;top:1292px;font-size:20.4px;line-height:26px;font-weight:400;color:#333;">0</div>
<div class="t" id="t202" style="left:1491.80px;top:1292px;font-size:20.4px;line-height:26px;font-weight:400;color:#333;">0</div>
<div class="t" id="t203" style="left:1525.70px;top:1292px;font-size:20.4px;line-height:26px;font-weight:400;color:#333;">0</div>
<div class="t" id="t204" style="left:1559.50px;top:1292px;font-size:20.4px;line-height:26px;font-weight:400;color:#333;">0</div>
<div class="t" id="t205" style="left:1605.80px;top:1292px;font-size:20.4px;line-height:26px;font-weight:400;color:#333;">40</div>
<div class="t" id="t206" style="left:1651.30px;top:1292px;font-size:20.4px;line-height:26px;font-weight:400;color:#333;">24</div>
<div class="t" id="t207" style="left:1697.80px;top:1292px;font-size:20.4px;line-height:26px;font-weight:400;color:#333;">0</div>
<div class="t" id="t208" style="left:1744.10px;top:1292px;font-size:20.4px;line-height:26px;font-weight:400;color:#333;">0</div>
<div class="t" id="t209" style="left:1777.60px;top:1292px;font-size:20.4px;line-height:26px;font-weight:400;color:#333;">24</div>
<div class="t" id="t210" style="left:1824.00px;top:1292px;font-size:20.4px;line-height:26px;font-weight:400;color:#333;">0</div>
<div class="t" id="t211" style="left:295.43px;top:1366px;font-size:20.4px;line-height:26px;font-weight:400;color:#333;">Row</div>
<div class="t" id="t212" style="left:296.28px;top:1391px;font-size:20.4px;line-height:26px;font-weight:400;color:#333;">5</div>
<div class="t" id="t213" style="left:359.70px;top:1366px;font-size:20.4px;line-height:26px;font-weight:400;color:#333;">13</div>
<div class="t" id="t214" style="left:405.70px;top:1366px;font-size:20.4px;line-height:26px;font-weight:400;color:#333;">0</div>
<div class="t" id="t215" style="left:439.70px;top:1366px;font-size:20.4px;line-height:26px;font-weight:400;color:#333;">169</div>
<div class="t" id="t216" style="left:495.70px;top:1366px;font-size:20.4px;line-height:26px;font-weight:400;color:#333;">51</div>
<div class="t" id="t217" style="left:541.70px;top:1366px;font-size:20.4px;line-height:26px;font-weight:400;color:#333;">100</div>
<div class="t" id="t218" style="left:597.70px;top:1366px;font-size:20.4px;line-height:26px;font-weight:400;color:#333;">167</div>
<div class="t" id="t219" style="left:653.70px;top:1366px;font-size:20.4px;line-height:26px;font-weight:400;color:#333;">321</div>
<div class="t" id="t220" style="left:709.70px;top:1366px;font-size:20.4px;line-height:26px;font-weight:400;color:#333;">174</div>
<div class="t" id="t221" style="left:765.70px;top:1366px;font-size:20.4px;line-height:26px;font-weight:400;color:#333;">91</div>
<div class="t" id="t222" style="left:821.70px;top:1366px;font-size:20.4px;line-height:26px;font-weight:400;color:#333;">107</div>
<div class="t" id="t223" style="left:877.70px;top:1366px;font-size:20.4px;line-height:26px;font-weight:400;color:#333;">66</div>
<div class="t" id="t224" style="left:923.70px;top:1366px;font-size:20.4px;line-height:26px;font-weight:400;color:#333;">52</div>
<div class="t" id="t225" style="left:978.10px;top:1366px;font-size:20.4px;line-height:26px;font-weight:400;color:#333;">88</div>
<div class="t" id="t226" style="left:1023.50px;top:1366px;font-size:20.4px;line-height:26px;font-weight:400;color:#333;">?</div>
<div class="t" id="t227" style="left:1069.50px;top:1366px;font-size:20.4px;line-height:26px;font-weight:400;color:#333;">84</div>
<div class="t" id="t228" style="left:1115.70px;top:1366px;font-size:20.4px;line-height:26px;font-weight:400;color:#333;">0</div>
<div class="t" id="t229" style="left:1150.00px;top:1366px;font-size:20.4px;line-height:26px;font-weight:400;color:#333;">36</div>
<div class="t" id="t230" style="left:1196.00px;top:1366px;font-size:20.4px;line-height:26px;font-weight:400;color:#333;">48</div>
<div class="t" id="t231" style="left:1241.50px;top:1366px;font-size:20.4px;line-height:26px;font-weight:400;color:#333;">0</div>
<div class="t" id="t232" style="left:1275.40px;top:1366px;font-size:20.4px;line-height:26px;font-weight:400;color:#333;">0</div>
<div class="t" id="t233" style="left:1309.40px;top:1366px;font-size:20.4px;line-height:26px;font-weight:400;color:#333;">20</div>
<div class="t" id="t234" style="left:1355.40px;top:1366px;font-size:20.4px;line-height:26px;font-weight:400;color:#333;">0</div>
<div class="t" id="t235" style="left:1389.70px;top:1366px;font-size:20.4px;line-height:26px;font-weight:400;color:#333;">0</div>
<div class="t" id="t236" style="left:1423.70px;top:1366px;font-size:20.4px;line-height:26px;font-weight:400;color:#333;">0</div>
<div class="t" id="t237" style="left:1457.90px;top:1366px;font-size:20.4px;line-height:26px;font-weight:400;color:#333;">0</div>
<div class="t" id="t238" style="left:1491.80px;top:1366px;font-size:20.4px;line-height:26px;font-weight:400;color:#333;">0</div>
<div class="t" id="t239" style="left:1525.70px;top:1366px;font-size:20.4px;line-height:26px;font-weight:400;color:#333;">0</div>
<div class="t" id="t240" style="left:1559.50px;top:1366px;font-size:20.4px;line-height:26px;font-weight:400;color:#333;">20</div>
<div class="t" id="t241" style="left:1605.80px;top:1366px;font-size:20.4px;line-height:26px;font-weight:400;color:#333;">44</div>
<div class="t" id="t242" style="left:1651.30px;top:1366px;font-size:20.4px;line-height:26px;font-weight:400;color:#333;">36</div>
<div class="t" id="t243" style="left:1697.80px;top:1366px;font-size:20.4px;line-height:26px;font-weight:400;color:#333;">0</div>
<div class="t" id="t244" style="left:1744.10px;top:1366px;font-size:20.4px;line-height:26px;font-weight:400;color:#333;">0</div>
<div class="t" id="t245" style="left:1777.60px;top:1366px;font-size:20.4px;line-height:26px;font-weight:400;color:#333;">44</div>
<div class="t" id="t246" style="left:1824.00px;top:1366px;font-size:20.4px;line-height:26px;font-weight:400;color:#333;">0</div>
</body></html>
